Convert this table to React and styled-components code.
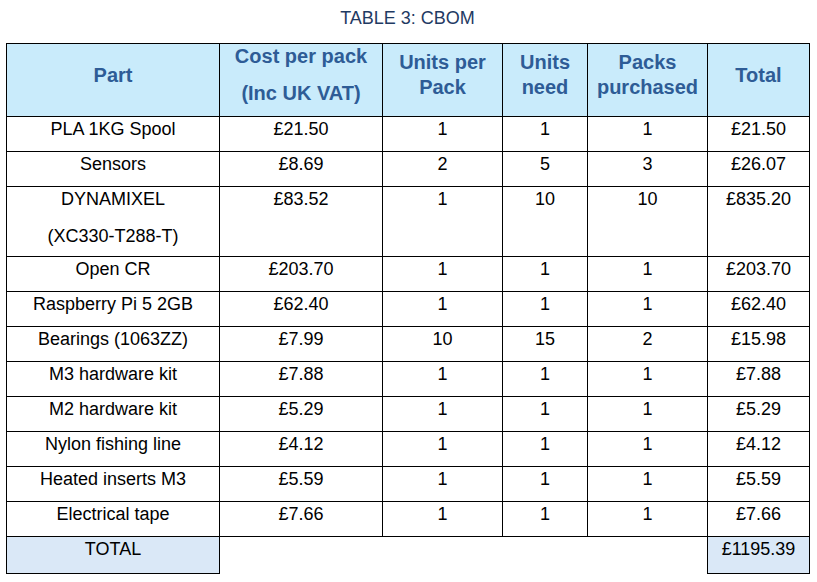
import React from 'react'
import styled, { createGlobalStyle } from 'styled-components'

const GlobalStyle = createGlobalStyle`
  html, body {
    margin: 0;
    padding: 0;
    background: #ffffff;
  }
  body {
    font-family: 'Liberation Sans', Arial, sans-serif;
  }
`

const Page = styled.div`
  width: 817px;
  height: 582px;
  padding: 5px 0 0 6px;
  box-sizing: border-box;
  overflow: hidden;
`

const Caption = styled.div`
  width: 803px;
  text-align: center;
  font-size: 18px;
  line-height: 27px;
  color: #1f3a63;
  margin-bottom: 11px;
`

const Table = styled.table`
  border-collapse: collapse;
  table-layout: fixed;
  width: 804px;
  font-size: 18px;
  color: #000;
`

const Col = styled.col`
  width: ${p => p.w}px;
`

const HeadCell = styled.th`
  height: 62px;
  padding: 0 0 10px;
  border: 1.5px solid #000;
  background: #c9ebfb;
  color: #2e5c96;
  font-size: 20px;
  font-weight: bold;
  text-align: center;
  vertical-align: middle;
  line-height: 25px;
  white-space: nowrap;
`

const Line = styled.div`
  margin-top: ${p => p.gap || 0}px;
`

const Row = styled.tr`
  height: ${p => p.h || 35}px;
`

const Cell = styled.td`
  padding: 0;
  border: 1.5px solid #000;
  text-align: center;
  vertical-align: top;
  line-height: 24px;
  white-space: nowrap;
  background: ${p => (p.total ? '#dae8f7' : 'transparent')};
`

const Blank = styled.td`
  border-top: 1.5px solid #000;
  border-bottom: none;
  padding: 0;
`

const columns = [213, 163, 120, 85, 120, 102]

const rows = [
  [['PLA 1KG Spool'], '£21.50', '1', '1', '1', '£21.50'],
  [['Sensors'], '£8.69', '2', '5', '3', '£26.07'],
  [['DYNAMIXEL', '(XC330-T288-T)'], '£83.52', '1', '10', '10', '£835.20'],
  [['Open CR'], '£203.70', '1', '1', '1', '£203.70'],
  [['Raspberry Pi 5 2GB'], '£62.40', '1', '1', '1', '£62.40'],
  [['Bearings (1063ZZ)'], '£7.99', '10', '15', '2', '£15.98'],
  [['M3 hardware kit'], '£7.88', '1', '1', '1', '£7.88'],
  [['M2 hardware kit'], '£5.29', '1', '1', '1', '£5.29'],
  [['Nylon fishing line'], '£4.12', '1', '1', '1', '£4.12'],
  [['Heated inserts M3'], '£5.59', '1', '1', '1', '£5.59'],
  [['Electrical tape'], '£7.66', '1', '1', '1', '£7.66']
]

export default function App() {
  return (
    <>
      <GlobalStyle />
      <Page>
        <Caption>TABLE 3: CBOM</Caption>
        <Table>
          <colgroup>
            {columns.map((w, i) => (
              <Col key={i} w={w} />
            ))}
          </colgroup>
          <thead>
            <tr>
              <HeadCell>Part</HeadCell>
              <HeadCell>
                <Line>Cost per pack</Line>
                <Line gap={12}>(Inc UK VAT)</Line>
              </HeadCell>
              <HeadCell>
                <Line>Units per</Line>
                <Line>Pack</Line>
              </HeadCell>
              <HeadCell>
                <Line>Units</Line>
                <Line>need</Line>
              </HeadCell>
              <HeadCell>
                <Line>Packs</Line>
                <Line>purchased</Line>
              </HeadCell>
              <HeadCell>Total</HeadCell>
            </tr>
          </thead>
          <tbody>
            {rows.map(([part, ...rest]) => (
              <Row key={part[0]} h={part.length > 1 ? 70 : 35}>
                <Cell>
                  {part.map((line, i) => (
                    <Line key={line} gap={i ? 13 : 0}>
                      {line}
                    </Line>
                  ))}
                </Cell>
                {rest.map((v, i) => (
                  <Cell key={i}>{v}</Cell>
                ))}
              </Row>
            ))}
            <Row h={37}>
              <Cell total>TOTAL</Cell>
              <Blank colSpan={4} />
              <Cell total>£1195.39</Cell>
            </Row>
          </tbody>
        </Table>
      </Page>
    </>
  )
}
